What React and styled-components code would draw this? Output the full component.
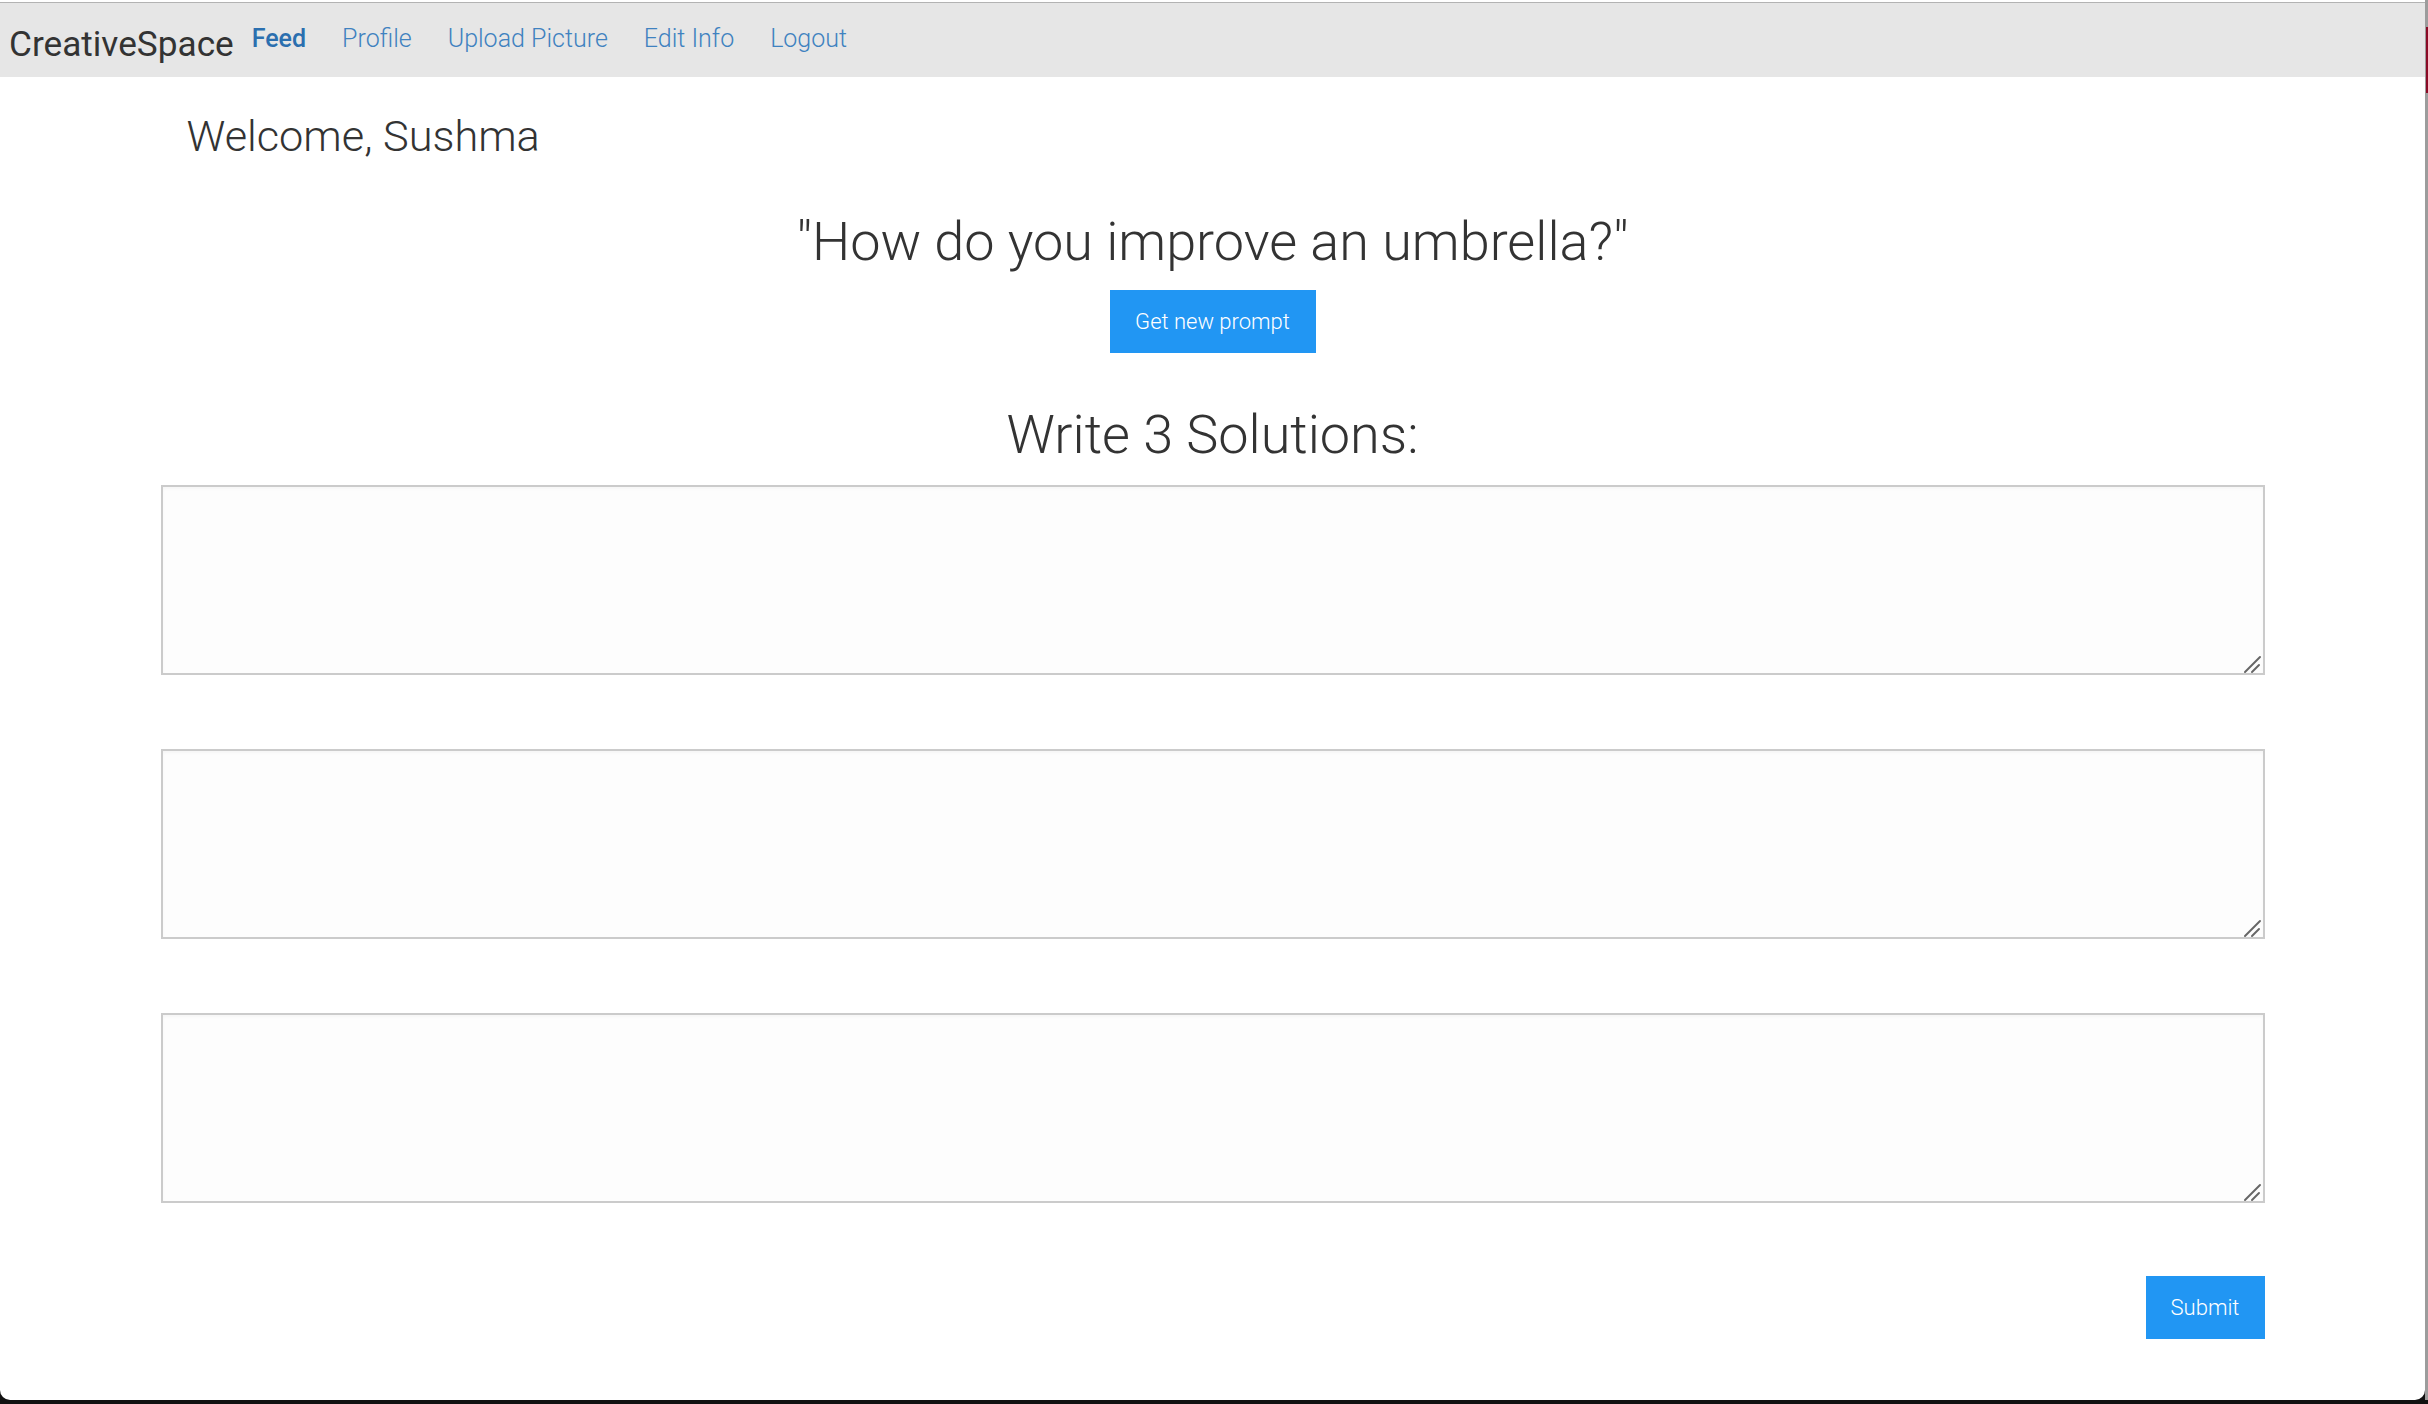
import React, { useState } from 'react'
import styled, { createGlobalStyle } from 'styled-components'

const GlobalStyle = createGlobalStyle`
	html, body {
		margin: 0;
		padding: 0;
		background: #111;
	}
	body {
		font-family: Roboto, 'Noto Sans', sans-serif;
		color: #333;
	}
	* {
		box-sizing: border-box;
	}
`

const ResizeGrip = () => (
	<Grip width="20" height="20" viewBox="0 0 20 20">
		<path d="M2 18 L17 3" stroke="#666" strokeWidth="2" strokeLinecap="round" />
		<path d="M9 18 L16 11" stroke="#666" strokeWidth="2" strokeLinecap="round" />
	</Grip>
)

const App = () => {
	const [answers, setAnswers] = useState(['', '', ''])

	const updateAnswer = (index, value) => {
		setAnswers(answers.map((item, i) => (i === index ? value : item)))
	}

	return (
		<Screen>
			<GlobalStyle />
			<Window>
				<TopLine />
				<Navbar>
					<Brand>CreativeSpace</Brand>
					<NavLinks>
						<NavLink active>Feed</NavLink>
						<NavLink>Profile</NavLink>
						<NavLink>Upload Picture</NavLink>
						<NavLink>Edit Info</NavLink>
						<NavLink>Logout</NavLink>
					</NavLinks>
				</Navbar>
				<Main>
					<Welcome>Welcome, Sushma</Welcome>
					<Prompt>"How do you improve an umbrella?"</Prompt>
					<PrimaryButton>Get new prompt</PrimaryButton>
					<Heading>Write 3 Solutions:</Heading>
					<Answers>
						{answers.map((value, i) => (
							<AnswerBox key={i}>
								<Answer value={value} onChange={e => updateAnswer(i, e.target.value)} />
								<ResizeGrip />
							</AnswerBox>
						))}
					</Answers>
					<Footer>
						<SubmitButton>Submit</SubmitButton>
					</Footer>
				</Main>
			</Window>
			<Edge>
				<EdgeMark />
			</Edge>
		</Screen>
	)
}

const Screen = styled.div`
	display: flex;
	width: 2428px;
	height: 1404px;
	background: #111;
	overflow: hidden;
`

const Window = styled.div`
	display: flex;
	flex-direction: column;
	width: 2425px;
	height: 1400px;
	background: #fff;
	border-bottom-left-radius: 10px;
	border-bottom-right-radius: 10px;
	overflow: hidden;
`

const TopLine = styled.div`
	height: 3px;
	background: linear-gradient(#fff 0, #fff 2px, #b3b3b3 2px);
`

const Navbar = styled.nav`
	display: flex;
	align-items: center;
	height: 74px;
	background: #e6e6e6;
	padding-left: 9px;
`

const Brand = styled.div`
	font-size: 35.2px;
	font-weight: 400;
	color: #333;
	margin-top: 7px;
`

const NavLinks = styled.div`
	display: flex;
	margin-left: 0px;
	margin-top: -3px;
`

const NavLink = styled.a`
	padding: 0 18px;
	font-size: 25px;
	font-weight: ${p => (p.active ? 500 : 300)};
	color: ${p => (p.active ? '#2b6faf' : '#3f82c0')};
	cursor: pointer;
`

const Main = styled.main`
	display: flex;
	flex-direction: column;
	align-items: center;
	width: 2104px;
	margin: 0 auto;
`

const Welcome = styled.h2`
	align-self: flex-start;
	margin: 35px 0 0 26px;
	font-size: 43.3px;
	line-height: 50px;
	font-weight: 300;
	color: #333;
`

const Prompt = styled.h1`
	margin: 48px 0 0;
	font-size: 54px;
	line-height: 64px;
	font-weight: 300;
	color: #333;
`

const Button = styled.button`
	border: none;
	border-radius: 0;
	background: #2196f3;
	color: #fff;
	font-family: Roboto, sans-serif;
	font-weight: 300;
	font-size: 22px;
	height: 63px;
	cursor: pointer;
`

const PrimaryButton = styled(Button)`
	margin-top: 16px;
	width: 206px;
`

const Heading = styled.h2`
	margin: 50px 0 0;
	font-size: 54px;
	line-height: 64px;
	font-weight: 300;
	color: #333;
`

const Answers = styled.div`
	display: flex;
	flex-direction: column;
	gap: 74px;
	width: 100%;
	margin-top: 18px;
`

const AnswerBox = styled.div`
	position: relative;
	width: 100%;
`

const Answer = styled.textarea`
	display: block;
	width: 100%;
	height: 190px;
	border: 2px solid #cbcbcb;
	background: #fdfdfd;
	box-shadow: inset 0 2px 3px rgba(0, 0, 0, 0.03);
	font-family: Roboto, sans-serif;
	font-size: 22px;
	padding: 10px;
	resize: none;
	outline: none;
`

const Grip = styled.svg`
	position: absolute;
	right: 2px;
	bottom: 1px;
	pointer-events: none;
`

const Footer = styled.div`
	display: flex;
	justify-content: flex-end;
	width: 100%;
	margin-top: 73px;
`

const SubmitButton = styled(Button)`
	width: 119px;
`

const Edge = styled.div`
	position: relative;
	width: 3px;
	height: 1400px;
	background: #9c9c9c;
`

const EdgeMark = styled.div`
	position: absolute;
	top: 27px;
	left: 1px;
	width: 2px;
	height: 66px;
	background: #8a0a25;
`

export default App
